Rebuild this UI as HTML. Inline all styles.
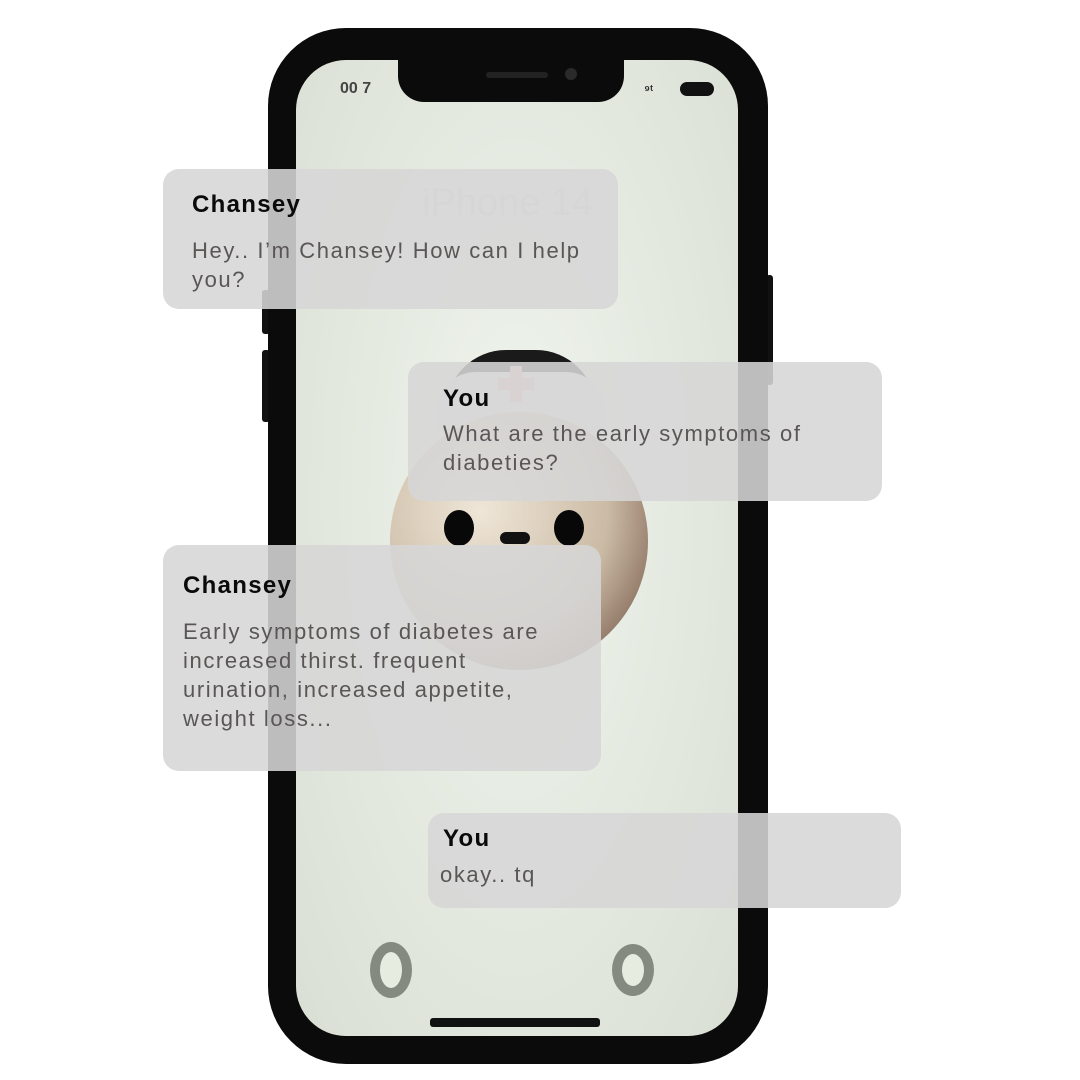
<!DOCTYPE html>
<html><head><meta charset="utf-8"><style>
*{margin:0;padding:0;box-sizing:border-box}
body{width:1080px;height:1080px;background:#fff;position:relative;overflow:hidden;font-family:"Liberation Sans",sans-serif}
.abs{position:absolute}
.phone{left:268px;top:28px;width:500px;height:1036px;background:#0b0b0b;border-radius:78px}
.screen{left:296px;top:60px;width:442px;height:976px;border-radius:50px;background:radial-gradient(ellipse at 50% 45%,#f0f4ee 0%,#e2e8de 60%,#d9dfd4 100%);overflow:hidden}
.notch{left:398px;top:58px;width:226px;height:44px;background:#0b0b0b;border-radius:0 0 26px 26px}
.b{position:absolute;background:rgba(214,214,214,0.88);border-radius:16px}
.n{position:absolute;font-weight:bold;font-size:24px;color:#0a0a0a;letter-spacing:1.3px}
.t{position:absolute;font-size:22px;color:#5a5656;line-height:29px;letter-spacing:1.6px}
</style></head><body>
<div class="abs" style="left:262px;top:290px;width:8px;height:44px;background:#111;border-radius:3px"></div>
<div class="abs" style="left:262px;top:350px;width:8px;height:72px;background:#111;border-radius:3px"></div>
<div class="abs" style="left:766px;top:275px;width:7px;height:110px;background:#111;border-radius:3px"></div>
<div class="abs phone"></div>
<div class="abs screen">
  <div class="abs" style="left:126px;top:122px;font-size:38px;color:#d3d6d1">iPhone 14</div>
  <div class="abs" style="left:150px;top:290px;width:150px;height:60px;border-radius:75px 75px 0 0;background:#1a1a1a"></div>
  <div class="abs" style="left:140px;top:312px;width:170px;height:60px;border-radius:40px 40px 10px 10px;background:#e6e6e2"></div>
  <div class="abs" style="left:94px;top:352px;width:258px;height:258px;border-radius:50%;background:radial-gradient(circle at 35% 38%,#efe6d8 0%,#cbbba5 55%,#5e3e30 100%)"></div>
  <div class="abs" style="left:148px;top:450px;width:30px;height:36px;border-radius:50%;background:#080808"></div>
  <div class="abs" style="left:258px;top:450px;width:30px;height:36px;border-radius:50%;background:#080808"></div>
  <div class="abs" style="left:204px;top:472px;width:30px;height:12px;border-radius:6px;background:#111"></div>
  <div class="abs" style="left:202px;top:318px;width:36px;height:12px;background:#e6b4b4"></div>
  <div class="abs" style="left:214px;top:306px;width:12px;height:36px;background:#e6b4b4"></div>
  <div class="abs" style="left:74px;top:882px;width:42px;height:56px;border-radius:50%;border:10px solid #858a80;background:#e6ece0"></div>
  <div class="abs" style="left:316px;top:884px;width:42px;height:52px;border-radius:50%;border:10px solid #858a80;background:#e6ece0"></div>
  <div class="abs" style="left:134px;top:958px;width:170px;height:9px;background:#111;border-radius:3px"></div>
  <div class="abs" style="left:44px;top:20px;font-size:16px;font-weight:bold;color:#444">00 7</div>
  <div class="abs" style="left:348px;top:22px;font-size:13px;font-weight:bold;color:#333">⁹ᵗ</div>
  <div class="abs" style="left:384px;top:22px;width:34px;height:14px;background:#111;border-radius:7px"></div>
</div>
<div class="abs notch"></div>
<div class="abs" style="left:486px;top:72px;width:62px;height:6px;background:#222;border-radius:3px"></div>
<div class="abs" style="left:565px;top:68px;width:12px;height:12px;background:#2a2a2a;border-radius:50%"></div>

<div class="b" style="left:163px;top:169px;width:455px;height:140px"></div>
<div class="n" style="left:192px;top:191px">Chansey</div>
<div class="t" style="left:192px;top:236px">Hey.. I’m Chansey! How can I help<br>you?</div>

<div class="b" style="left:408px;top:362px;width:474px;height:139px"></div>
<div class="n" style="left:443px;top:385px">You</div>
<div class="t" style="left:443px;top:419px">What are the early symptoms of<br>diabeties?</div>

<div class="b" style="left:163px;top:545px;width:438px;height:226px"></div>
<div class="n" style="left:183px;top:572px">Chansey</div>
<div class="t" style="left:183px;top:617px">Early symptoms of diabetes are<br>increased thirst. frequent<br>urination, increased appetite,<br>weight loss...</div>

<div class="b" style="left:428px;top:813px;width:473px;height:95px"></div>
<div class="n" style="left:443px;top:825px">You</div>
<div class="t" style="left:440px;top:860px">okay.. tq</div>
</body></html>
